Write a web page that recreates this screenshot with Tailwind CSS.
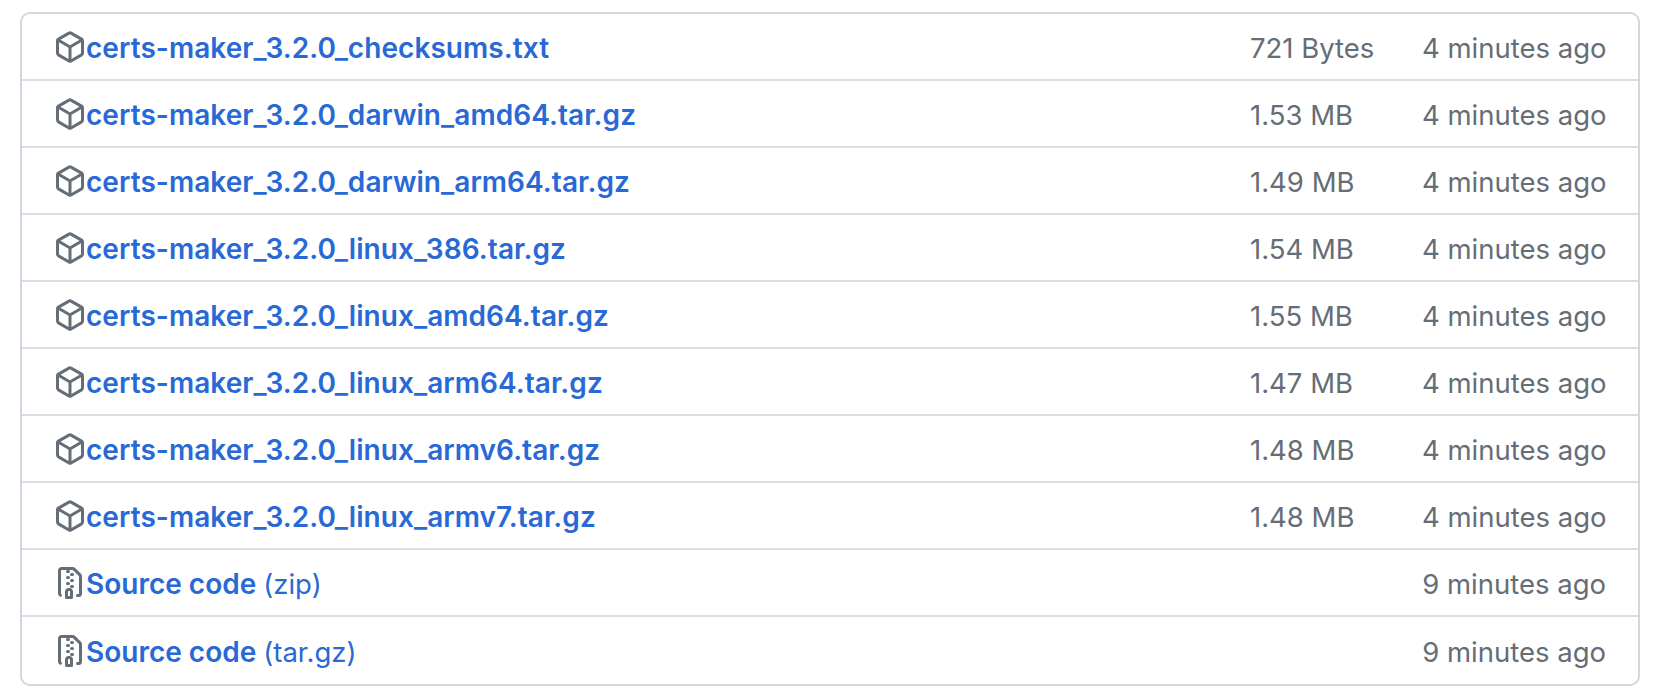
<!DOCTYPE html>
<html lang="en">
<head>
  <meta charset="UTF-8">
  <title>Release assets</title>
  <script src="https://cdn.jsdelivr.net/npm/@tailwindcss/browser@4"></script>
</head>
<body class="bg-white font-['Inter',sans-serif]">
  <div class="pt-3 pl-5 pr-[18px]">
    <ul id="assets" class="border-2 border-[#d0d7de] rounded-[10px] text-[27.5px] leading-[37px]"></ul>
  </div>

  <script>
// Octicons used in the list
const packageIcon = `<svg viewBox="0 0 16 16" class="w-8 h-8 shrink-0 fill-[#656d76]"><path d="m8.878.392 5.25 3.045c.54.314.872.89.872 1.514v6.098a1.75 1.75 0 0 1-.872 1.514l-5.25 3.045a1.75 1.75 0 0 1-1.756 0l-5.25-3.045A1.75 1.75 0 0 1 1 11.049V4.951c0-.624.332-1.201.872-1.514L7.122.392a1.75 1.75 0 0 1 1.756 0ZM7.875 1.69l-4.63 2.685L8 7.133l4.755-2.758-4.63-2.685a.248.248 0 0 0-.25 0ZM2.5 5.677v5.372c0 .09.047.171.125.216l4.625 2.683V8.432Zm6.25 8.271 4.625-2.683a.25.25 0 0 0 .125-.216V5.677L8.75 8.432Z"/></svg>`;
const zipIcon = `<svg viewBox="0 0 16 16" class="w-8 h-8 shrink-0 fill-[#656d76]"><path d="M3.5 1.75v11.5c0 .09.048.173.126.217a.75.75 0 0 1-.752 1.298A1.748 1.748 0 0 1 2 13.25V1.75C2 .784 2.784 0 3.75 0h5.586c.464 0 .909.185 1.237.513l2.914 2.914c.329.328.513.773.513 1.237v8.586A1.75 1.75 0 0 1 12.25 15h-.5a.75.75 0 0 1 0-1.5h.5a.25.25 0 0 0 .25-.25V4.664a.25.25 0 0 0-.073-.177L9.513 1.573a.25.25 0 0 0-.177-.073H7.25a.75.75 0 0 1 0 1.5h-.5a.75.75 0 0 1 0-1.5h-3a.25.25 0 0 0-.25.25Zm3.75 8.75h.5c.966 0 1.75.784 1.75 1.75v3a.75.75 0 0 1-.75.75h-2.5a.75.75 0 0 1-.75-.75v-3c0-.966.784-1.75 1.75-1.75ZM6 5.25a.75.75 0 0 1 .75-.75h.5a.75.75 0 0 1 0 1.5h-.5A.75.75 0 0 1 6 5.25Zm.75 2.25h.5a.75.75 0 0 1 0 1.5h-.5a.75.75 0 0 1 0-1.5ZM8 6.75A.75.75 0 0 1 8.75 6h.5a.75.75 0 0 1 0 1.5h-.5A.75.75 0 0 1 8 6.75ZM8.75 3h.5a.75.75 0 0 1 0 1.5h-.5a.75.75 0 0 1 0-1.5ZM8 9.75A.75.75 0 0 1 8.75 9h.5a.75.75 0 0 1 0 1.5h-.5A.75.75 0 0 1 8 9.75Zm-1 2.5v2.25h1v-2.25a.25.25 0 0 0-.25-.25h-.5a.25.25 0 0 0-.25.25Z"/></svg>`;

const assets = [
  ["certs-maker_3.2.0_checksums.txt", "721 Bytes"],
  ["certs-maker_3.2.0_darwin_amd64.tar.gz", "1.53 MB"],
  ["certs-maker_3.2.0_darwin_arm64.tar.gz", "1.49 MB"],
  ["certs-maker_3.2.0_linux_386.tar.gz", "1.54 MB"],
  ["certs-maker_3.2.0_linux_amd64.tar.gz", "1.55 MB"],
  ["certs-maker_3.2.0_linux_arm64.tar.gz", "1.47 MB"],
  ["certs-maker_3.2.0_linux_armv6.tar.gz", "1.48 MB"],
  ["certs-maker_3.2.0_linux_armv7.tar.gz", "1.48 MB"],
];
const sources = ["zip", "tar.gz"];

const assetRows = assets.map(([name, size]) => `
  <li class="h-[67px] flex items-center justify-between pl-8 pr-8 border-b-2 border-[#d8dee4]">
    <div class="flex items-center">
      ${packageIcon}
      <a href="#" class="pt-1 font-semibold text-[28px] tracking-[0.06px] text-[#2869d6]">${name}</a>
    </div>
    <div class="flex pt-1 whitespace-nowrap text-[#656d76]">
      <span class="w-[172px]">${size}</span>
      <span class="w-[184px] text-right">4 minutes ago</span>
    </div>
  </li>
`);

const sourceRows = sources.map((type, idx) => `
  <li class="h-[67px] flex items-center justify-between pl-8 pr-8 ${idx < sources.length - 1 ? "border-b-2 border-[#d8dee4]" : ""}">
    <div class="flex items-center">
      ${zipIcon}
      <a href="#" class="pt-1 text-[#2869d6]"><span class="font-semibold text-[28px]">Source code</span><span class="ml-[7px]">(${type})</span></a>
    </div>
    <div class="flex pt-1 whitespace-nowrap text-[#656d76]">
      <span class="w-[184px] text-right">9 minutes ago</span>
    </div>
  </li>
`);

document.getElementById("assets").innerHTML = assetRows.concat(sourceRows).join("");
  </script>
</body>
</html>
